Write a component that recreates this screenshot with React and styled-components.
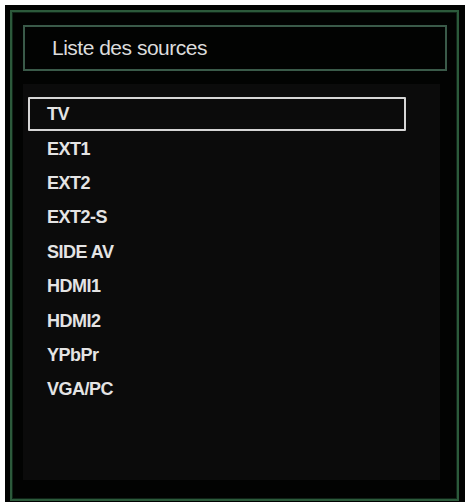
import React from 'react'
import styled, { createGlobalStyle } from 'styled-components'

const GlobalStyle = createGlobalStyle`
  html, body {
    margin: 0;
    padding: 0;
    background: #ffffff;
  }
  body {
    font-family: "Liberation Sans", Arial, sans-serif;
  }
`;

const Screen = styled.div`
  margin: 5px 0 0 5px;
  width: 460px;
  height: 497px;
  box-sizing: border-box;
  background: #020302;
  padding: 5px 6px 1px 5px;
`;

const Panel = styled.div`
  height: 100%;
  box-sizing: border-box;
  border: 2px solid #2c5a3b;
  box-shadow: inset 0 0 0 1px #0f2417;
  padding: 13px 10px 19px 11px;
  display: flex;
  flex-direction: column;
  gap: 13px;
`;

const Header = styled.div`
  height: 46px;
  box-sizing: border-box;
  border: 2px solid #3a5a49;
  display: flex;
  align-items: center;
  padding-left: 27px;
  padding-bottom: 1px;
`;

const Title = styled.h1`
  margin: 0;
  font-family: "Liberation Sans", Arial, sans-serif;
  font-weight: normal;
  font-size: 21px;
  letter-spacing: -0.5px;
  color: #dcdcdc;
`;

const List = styled.ul`
  list-style: none;
  margin: 0 7px 0 0;
  padding: 13px 0 0 5px;
  flex: 1;
  background: #0b0b0b;
`;

const Item = styled.li`
  width: 378px;
  height: 34.4px;
  box-sizing: border-box;
  border: 2px solid ${p => (p.$active ? '#d6d6d6' : 'transparent')};
  border-radius: 1px;
  display: flex;
  align-items: center;
  padding-left: 17px;
  padding-top: 1px;
  font-family: "Liberation Sans", Arial, sans-serif;
  font-weight: bold;
  font-size: 18px;
  letter-spacing: -0.5px;
  color: #e4e4e4;
`;

const sources = ['TV', 'EXT1', 'EXT2', 'EXT2-S', 'SIDE AV', 'HDMI1', 'HDMI2', 'YPbPr', 'VGA/PC'];

const App = () => {
  return (
    <>
      <GlobalStyle />
      <Screen>
        <Panel>
          <Header>
            <Title>Liste des sources</Title>
          </Header>
          <List>
            {sources.map((s, i) => (
              <Item key={s} $active={i === 0}>{s}</Item>
            ))}
          </List>
        </Panel>
      </Screen>
    </>
  )
}

export default App
